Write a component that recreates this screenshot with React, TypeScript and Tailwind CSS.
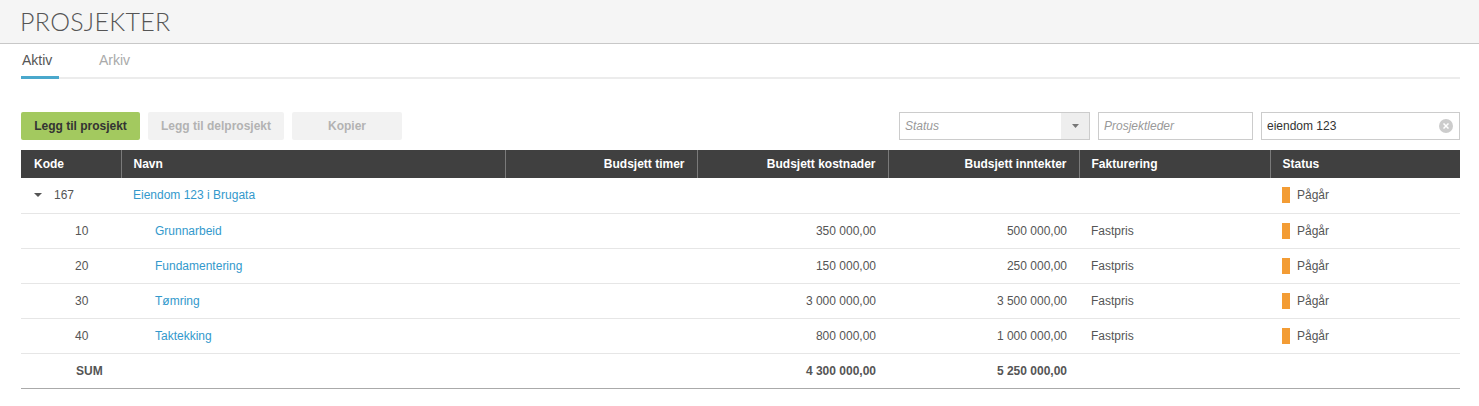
import { useState } from 'react';

interface Row {
  code: string;
  name: string;
  cost?: string;
  income?: string;
  billing?: string;
  status?: string;
  parent?: boolean;
}

const rows: Row[] = [
  { code: '167', name: 'Eiendom 123 i Brugata', status: 'Pågår', parent: true },
  { code: '10', name: 'Grunnarbeid', cost: '350 000,00', income: '500 000,00', billing: 'Fastpris', status: 'Pågår' },
  { code: '20', name: 'Fundamentering', cost: '150 000,00', income: '250 000,00', billing: 'Fastpris', status: 'Pågår' },
  { code: '30', name: 'Tømring', cost: '3 000 000,00', income: '3 500 000,00', billing: 'Fastpris', status: 'Pågår' },
  { code: '40', name: 'Taktekking', cost: '800 000,00', income: '1 000 000,00', billing: 'Fastpris', status: 'Pågår' },
];

const th = 'h-[28px] px-[12px] text-[12px] font-bold text-white border-l border-[#7a7a7a] first:border-l-0';
const td = 'h-[35px] px-[12px] text-[12px] text-[#555]';

export default function App() {
  const [tab, setTab] = useState('aktiv');
  const [search, setSearch] = useState('eiendom 123');

  return (
    <div className="min-h-[406px] bg-white font-['Liberation_Sans',Arial,sans-serif]">
      {/* Page header */}
      <div className="h-[44px] bg-[#f5f5f5] border-b border-[#c8c8c8] pl-[20px] flex items-center">
        <h1 className="font-['Lato',sans-serif] font-light text-[25px] tracking-[0.3px] text-[#555] leading-none">
          PROSJEKTER
        </h1>
      </div>

      <div className="pl-[21px] pr-[19px]">
        {/* Tabs */}
        <div className="flex gap-[40px] border-b-2 border-[#ececec] pt-[8px]">
          <button
            onClick={() => setTab('aktiv')}
            className={`w-[38px] text-left pl-[1px] pb-[8px] text-[14px] leading-[16px] border-b-[3px] -mb-[2px] ${
              tab === 'aktiv' ? 'border-[#4aa8cc] text-[#555]' : 'border-transparent text-[#aaa]'
            }`}
          >
            Aktiv
          </button>
          <button
            onClick={() => setTab('arkiv')}
            className={`w-[38px] text-left pb-[8px] text-[14px] leading-[16px] border-b-[3px] -mb-[2px] ${
              tab === 'arkiv' ? 'border-[#4aa8cc] text-[#555]' : 'border-transparent text-[#aaa]'
            }`}
          >
            Arkiv
          </button>
        </div>

        {/* Toolbar */}
        <div className="flex items-center justify-between mt-[33px] mb-[10px]">
          <div className="flex gap-[8px]">
            <button className="h-[28px] w-[119px] rounded-[2px] bg-[#a3c95f] text-[12px] font-bold text-[#333]">
              Legg til prosjekt
            </button>
            <button className="h-[28px] w-[136px] rounded-[2px] bg-[#f2f2f2] text-[12px] font-bold text-[#b3b3b3]">
              Legg til delprosjekt
            </button>
            <button className="h-[28px] w-[110px] rounded-[2px] bg-[#f2f2f2] text-[12px] font-bold text-[#b3b3b3]">
              Kopier
            </button>
          </div>
          <div className="flex gap-[8px]">
            <div className="h-[28px] w-[191px] border border-[#ccc] flex">
              <span className="flex-1 pl-[5px] flex items-center text-[12px] italic text-[#999]">Status</span>
              <span className="w-[28px] bg-[#eee] flex items-center justify-center">
                <svg width="7" height="4" viewBox="0 0 7 4">
                  <path d="M0 0h7L3.5 4z" fill="#777" />
                </svg>
              </span>
            </div>
            <input
              placeholder="Prosjektleder"
              className="h-[28px] w-[155px] border border-[#ccc] px-[5px] text-[12px] text-[#333] placeholder:italic placeholder:text-[#999] outline-none"
            />
            <div className="h-[28px] w-[199px] border border-[#ccc] flex items-center pr-[6px]">
              <input
                value={search}
                onChange={(e) => setSearch(e.target.value)}
                className="flex-1 min-w-0 px-[5px] text-[12px] text-[#333] outline-none"
              />
              <button onClick={() => setSearch('')} className="size-[14px] rounded-full bg-[#ccc] flex items-center justify-center">
                <svg width="6" height="6" viewBox="0 0 6 6">
                  <path d="M0.5 0.5l5 5M5.5 0.5l-5 5" stroke="white" strokeWidth="1.5" />
                </svg>
              </button>
            </div>
          </div>
        </div>

        {/* Table */}
        <table className="w-[1439px] border-collapse table-fixed">
          <colgroup>
            <col className="w-[100px]" />
            <col className="w-[384px]" />
            <col className="w-[192px]" />
            <col className="w-[191px]" />
            <col className="w-[191px]" />
            <col className="w-[191px]" />
            <col className="w-[190px]" />
          </colgroup>
          <thead className="bg-[#404040]">
            <tr>
              <th className={`${th} text-left pl-[13px]`}>Kode</th>
              <th className={`${th} text-left`}>Navn</th>
              <th className={`${th} text-right`}>Budsjett timer</th>
              <th className={`${th} text-right`}>Budsjett kostnader</th>
              <th className={`${th} text-right`}>Budsjett inntekter</th>
              <th className={`${th} text-left`}>Fakturering</th>
              <th className={`${th} text-left`}>Status</th>
            </tr>
          </thead>
          <tbody>
            {rows.map((r) => (
              <tr key={r.code} className="border-b border-[#e6e6e6]">
                <td className={td}>
                  {r.parent ? (
                    <span className="flex items-center pl-[1px]">
                      <svg width="8" height="4" viewBox="0 0 8 4" className="mr-[12px]">
                        <path d="M0 0h8L4 4z" fill="#555" />
                      </svg>
                      {r.code}
                    </span>
                  ) : (
                    <span className="pl-[42px]">{r.code}</span>
                  )}
                </td>
                <td className={td}>
                  <a className={`text-[#3399cc] cursor-pointer ${r.parent ? '' : 'pl-[22px]'}`}>{r.name}</a>
                </td>
                <td className={td} />
                <td className={`${td} text-right`}>{r.cost}</td>
                <td className={`${td} text-right`}>{r.income}</td>
                <td className={td}>{r.billing}</td>
                <td className={td}>
                  <span className="flex items-center gap-[7px]">
                    <span className="w-[8px] h-[16px] bg-[#f39c34]" />
                    {r.status}
                  </span>
                </td>
              </tr>
            ))}
            <tr className="border-b border-[#aaa]">
              <td className={`${td} font-bold`}>
                <span className="pl-[43px]">SUM</span>
              </td>
              <td className={td} />
              <td className={td} />
              <td className={`${td} text-right font-bold`}>4 300 000,00</td>
              <td className={`${td} text-right font-bold`}>5 250 000,00</td>
              <td className={td} />
              <td className={td} />
            </tr>
          </tbody>
        </table>
      </div>
    </div>
  );
}
